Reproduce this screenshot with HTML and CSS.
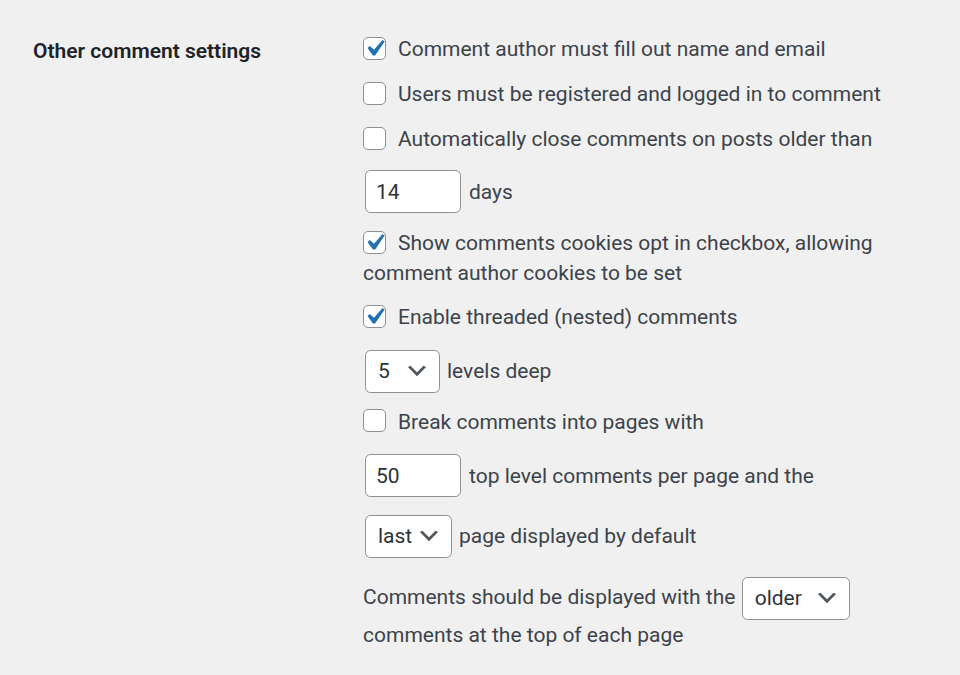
FILE: index.html
```html
<!DOCTYPE html>
<html lang="en">
<head>
<meta charset="utf-8">
<title>Other comment settings</title>
<link rel="stylesheet" href="styles.css">
</head>
<body>
<div class="row">
  <div class="th">Other comment settings</div>
  <div class="td">
    <label class="opt first"><span class="cb checked"><svg viewBox="0 0 20 20"><path d="M14.83 4.89l1.34.94-5.81 8.38H9.02L5.78 9.67l1.34-1.25 2.57 2.4z"/></svg></span>Comment author must fill out name and email</label>
    <label class="opt"><span class="cb"></span>Users must be registered and logged in to comment</label>
    <label class="opt"><span class="cb"></span>Automatically close comments on posts older than</label>
    <div class="field first-field"><input class="num" type="text" value="14"><span>days</span></div>
    <label class="opt"><span class="cb checked"><svg viewBox="0 0 20 20"><path d="M14.83 4.89l1.34.94-5.81 8.38H9.02L5.78 9.67l1.34-1.25 2.57 2.4z"/></svg></span>Show comments cookies opt in checkbox, allowing comment author cookies to be set</label>
    <label class="opt tight"><span class="cb checked"><svg viewBox="0 0 20 20"><path d="M14.83 4.89l1.34.94-5.81 8.38H9.02L5.78 9.67l1.34-1.25 2.57 2.4z"/></svg></span>Enable threaded (nested) comments</label>
    <div class="field"><span class="sel sel-levels">5<svg viewBox="0 0 20 20"><path d="M5 6l5 5 5-5 2 1-7 7-7-7 2-1z"/></svg></span><span>levels deep</span></div>
    <label class="opt tight"><span class="cb"></span>Break comments into pages with</label>
    <div class="field"><input class="num" type="text" value="50"><span>top level comments per page and the</span></div>
    <div class="field"><span class="sel sel-last">last<svg viewBox="0 0 20 20"><path d="M5 6l5 5 5-5 2 1-7 7-7-7 2-1z"/></svg></span><span>page displayed by default</span></div>
    <p class="para">Comments should be displayed with the <span class="sel sel-older">older<svg viewBox="0 0 20 20"><path d="M5 6l5 5 5-5 2 1-7 7-7-7 2-1z"/></svg></span> comments at the top of each page</p>
  </div>
</div>
</body>
</html>
```

FILE: styles.css
```css
html, body {
  margin: 0;
  padding: 0;
  background: #f0f0f1;
}
body {
  font-family: Roboto, "Liberation Sans", sans-serif;
  font-size: 21px;
  color: #3c434a;
}
.row {
  display: flex;
  padding: 34px 0 0 33px;
}
.th {
  width: 330px;
  flex: none;
  color: #1d2327;
  font-weight: 600;
  line-height: 30px;
  padding-top: 2px;
}
.td {
  width: 578px;
  display: flex;
  flex-direction: column;
}
.opt {
  display: block;
  line-height: 30px;
  margin-top: 15px;
}
.opt.first { margin-top: 0; }
.opt.tight { margin-top: 14px; }
.cb {
  display: inline-block;
  box-sizing: border-box;
  width: 23px;
  height: 23px;
  border: 1.4px solid #8c8f94;
  border-radius: 5px;
  background: #fff;
  vertical-align: middle;
  margin: -4px 12px 0 0;
  position: relative;
}
.cb svg {
  position: absolute;
  left: -6px;
  top: -6px;
  width: 33px;
  height: 33px;
  fill: #2271b1;
}
.field {
  display: flex;
  align-items: center;
  gap: 8px;
  margin-top: 17.5px;
  line-height: 30px;
}
.field.first-field { margin-top: 16px; }
.num {
  box-sizing: border-box;
  width: 96px;
  height: 43px;
  margin: 0 0 0 2px;
  padding: 0 10px;
  border: 1.4px solid #8c8f94;
  border-radius: 5.6px;
  background: #fff;
  font-family: inherit;
  font-size: 21px;
  color: #2c3338;
  outline: none;
}
.sel {
  box-sizing: border-box;
  display: inline-flex;
  align-items: center;
  justify-content: space-between;
  height: 43px;
  padding: 0 9px 0 12px;
  border: 1.4px solid #8c8f94;
  border-radius: 5.6px;
  background: #fff;
  color: #2c3338;
  vertical-align: middle;
  line-height: 30px;
}
.sel svg {
  width: 26px;
  height: 26px;
  fill: #50575e;
}
.field .sel { margin-left: 2px; margin-right: -1px; }
.sel-levels { width: 75px; }
.sel-last { width: 87px; }
.sel-older { width: 108px; margin-left: 1px; }
.para {
  margin: 19px 0 0 0;
  line-height: 30px;
}
```
